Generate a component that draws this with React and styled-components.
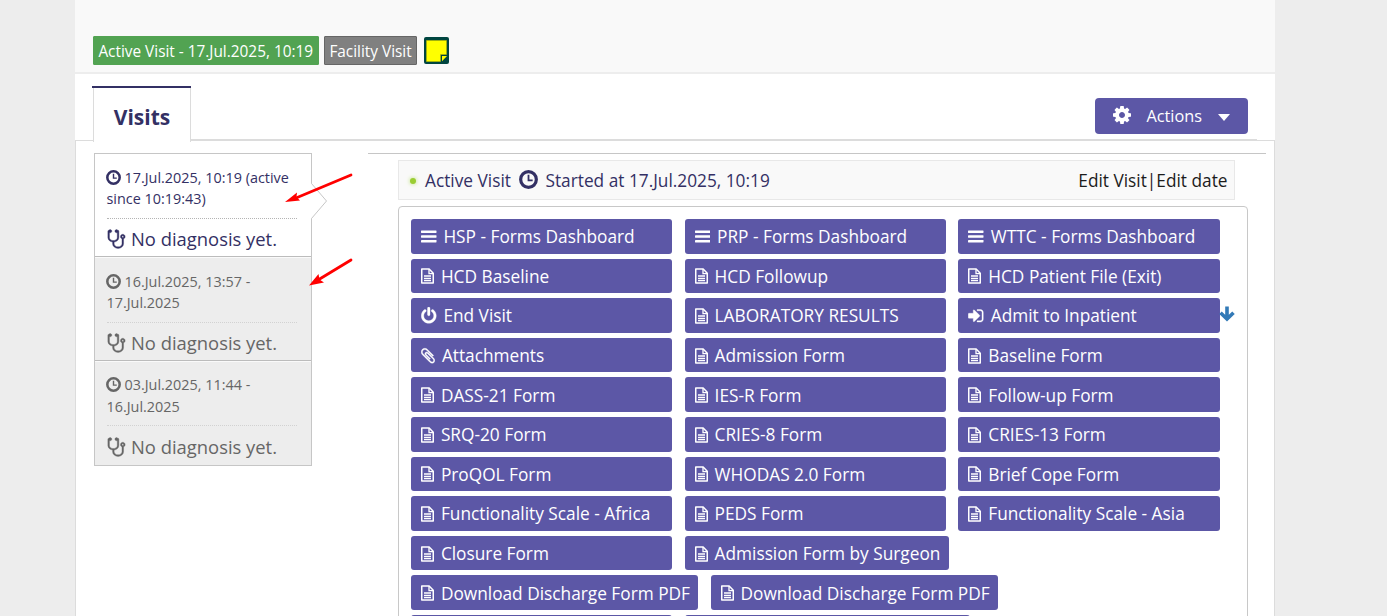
import React from "react";
import styled, { createGlobalStyle, css } from "styled-components";

const Global = createGlobalStyle`
  * { box-sizing: border-box; }
  body { margin: 0; background: #ededed; font-family: "Open Sans", "Noto Sans", sans-serif; color: #333064; overflow: hidden; }
`;

const Page = styled.div`
  width: 1200px;
  height: 616px;
  margin-left: 75px;
  display: flex;
  flex-direction: column;
  background: #fff;
  overflow: hidden;
`;

const Header = styled.header`
  flex: none;
  height: 74px;
  background: #f9f9f9;
  border-bottom: 2px solid #ededed;
  padding: 36px 0 0 18px;
  display: flex;
  align-items: flex-start;
`;

const Tag = styled.span`
  height: 29px;
  width: ${(p) => p.$width}px;
  margin-right: ${(p) => p.$gap}px;
  border: 1px solid ${(p) => p.$border};
  border-radius: 1px;
  background: ${(p) => p.$color};
  color: #fff;
  font-size: 15.36px;
  line-height: 30px;
  padding-left: 4.4px;
  white-space: nowrap;
`;

const Note = styled.svg`
  margin-top: 1px;
  flex: none;
`;

const TabStrip = styled.div`
  flex: none;
  height: 67px;
  display: flex;
  align-items: flex-end;
`;

const TabLine = styled.div`
  height: ${(p) => p.$height}px;
  background: #dcdcdc;
  ${(p) => (p.$width ? css`width: ${p.$width}px;` : css`flex: 1;`)}
`;

const Tab = styled.div`
  width: 99px;
  height: 56px;
  margin: 0 0 -1px -1px;
  border-top: 2px solid #333064;
  position: relative;
  z-index: 1;
`;

const TabFace = styled.div`
  margin-left: 1px;
  height: 54px;
  background: #fff;
  border: solid #dcdcdc;
  border-width: 0 1px;
  text-align: center;
  font-size: 21px;
  font-weight: 700;
  line-height: 59px;
`;

const ActionsCell = styled.div`
  flex: 1;
  display: flex;
  flex-direction: column;
  align-items: flex-end;
`;

const ActionsButton = styled.button`
  width: 153px;
  height: 36px;
  margin: 0 27px 5px 0;
  padding: 0 18px 0 17.5px;
  border: 0;
  border-radius: 4px;
  background: #5c57a6;
  color: #fff;
  font: 16.3px "Open Sans", sans-serif;
  display: flex;
  align-items: center;
  justify-content: space-between;
`;

const GearIcon = styled.svg`
  margin-top: -2px;
`;

const Caret = styled.svg`
  margin-top: 2px;
`;

const Lines = styled.div`
  width: 100%;
  display: flex;
  align-items: flex-end;
`;

const Panel = styled.main`
  flex: 1;
  min-height: 0;
  border: solid #dcdcdc;
  border-width: 0 1px;
  padding: 12px 8px 0 18px;
  display: flex;
  align-items: flex-start;
`;

const VisitList = styled.aside`
  width: 218px;
  margin-right: 56px;
  border: 1px solid #c6c6c6;
  flex: none;
`;

const Visit = styled.div`
  position: relative;
  height: ${(p) => p.$height}px;
  padding: ${(p) => (p.$last ? 12 : 12.5)}px 14px 0 11px;
  color: ${(p) => (p.$active ? "#333064" : "#666")};
  background: ${(p) => (p.$active ? "#fff" : "#ededed")};
  border-bottom: ${(p) => (p.$last ? "0" : "1px solid #bcbcbc")};
  border-top: ${(p) => (p.$active ? "0" : "1px solid #fafafa")};
`;

const VisitDate = styled.div`
  font-size: 14.4px;
  line-height: 21.5px;
  height: ${(p) => (p.$last ? 52 : 52.5)}px;
  margin-left: 0.5px;
  white-space: nowrap;
  border-bottom: 1px dotted ${(p) => (p.$active ? "#b4b4b4" : "#d2d2d2")};
  svg { vertical-align: -2px; margin: 0 3.5px 0 -0.5px; }
`;

const Diagnosis = styled.div`
  font-size: 18.4px;
  line-height: 24px;
  padding-top: ${(p) => (p.$last ? 9 : 8)}px;
  display: flex;
  align-items: center;
  gap: 5px;
  padding-left: 1px;
`;

const Pointer = styled.svg`
  position: absolute;
  left: 216px;
  top: 28px;
`;

const Detail = styled.section`
  flex: 1;
  height: 463px;
  border-top: 1px solid #c6c6c6;
  padding: 6px 18px 0 30px;
`;

const StatusBar = styled.div`
  width: 837px;
  height: 40px;
  padding: 1px 6.5px 0 11px;
  border: 1px solid #e8e8e8;
  background: #f9f9f9;
  display: flex;
  align-items: center;
  font-size: 17.28px;
  svg { margin: -3px 7.8px 0; }
`;

const Dot = styled.i`
  width: 6px;
  height: 6px;
  margin-right: 9px;
  border-radius: 50%;
  background: #9acd32;
  box-shadow: 0 0 4px #b9e070;
`;

const EditLinks = styled.span`
  margin-left: auto;
  color: #1c1c1c;
`;

const FormsBox = styled.div`
  width: 850px;
  height: 430px;
  margin-top: 6px;
  padding: 12px;
  border: 1px solid #c8c8c8;
  border-radius: 4px;
  display: flex;
  flex-direction: column;
  gap: 5px;
`;

const FormRow = styled.div`
  position: relative;
  flex: none;
  display: flex;
  gap: 12.4px;
`;

const FormButton = styled.button`
  min-width: ${(p) => p.$width || 261.3}px;
  height: 34.6px;
  padding: 1px 8.3px 0 10px;
  border: 0;
  border-radius: 3px;
  background: #5c57a6;
  color: #fff;
  font: 17.28px "Open Sans", sans-serif;
  white-space: nowrap;
  display: flex;
  align-items: center;
  gap: 6.9px;
`;

const DownArrow = styled.svg`
  position: absolute;
  left: 808px;
  top: 8px;
`;

const Annotations = styled.svg`
  position: absolute;
  left: 280px;
  top: 168px;
  z-index: 3;
`;

const paths = {
  clip: [1408, "M1404 1385q0 117-79 196t-196 79q-135 0-235-100L117 784Q4 669 4 513q0-159 110-270t269-111q158 0 273 113l605 606q10 10 10 22 0 16-30.5 46.500T1194 950q-13 0-23-10L565 333q-79-77-181-77-106 0-179 75t-73 181q0 105 76 181l776 777q63 63 145 63 64 0 106-42t42-106q0-82-63-145L633 659q-26-24-60-24-29 0-48 19t-19 48q0 32 25 59l410 410q10 10 10 22 0 16-31 47t-47 31q-12 0-22-10L441 851q-63-61-63-149 0-82 57-139t139-57q88 0 149 63l581 581q100 98 100 235z"],
  power: [1536, "M1536 896q0 156-61 298t-164 245-245 164-298 61-298-61-245-164-164-245-61-298q0-182 80.500-343t226.500-270q43-32 95.500-25t83.500 50q32 42 24.500 94.500t-49.500 84.500q-98 74-151.500 181t-53.500 228q0 104 40.500 198.500t109.500 163.500 163.500 109.500 198.500 40.500 198.500-40.500 163.500-109.500 109.500-163.500 40.500-198.500q0-121-53.500-228t-151.500-181q-42-32-49.500-84.500t24.500-94.500q31-43 84-50t95 25q146 109 226.500 270t80.500 343zm-640-768v640q0 52-38 90t-90 38-90-38-38-90v-640q0-52 38-90t90-38 90 38 38 90z"],
  enter: [1536, "M1184 896q0 26-19 45L621 1485q-19 19-45 19t-45-19-19-45v-288H64q-26 0-45-19t-19-45V704q0-26 19-45t45-19h448V352q0-26 19-45t45-19 45 19l544 544q19 19 19 45zm352-352v704q0 119-84.500 203.500T1248 1536H928q-13 0-22.500-9.500T896 1504q0-4-1-20t-.5-26.500 3-23.500 10-19.500 20.500-6.500h320q66 0 113-47t47-113V544q0-66-47-113t-113-47H936l-11.500-1-11.500-3-8-5.500-7-9-2-13.500q0-4-1-20t-.5-26.500 3-23.500 10-19.500T928 256h320q119 0 203.500 84.500T1536 544z"],
};

const FormIcon = ({ kind }) => {
  if (kind === "menu") {
    return (
      <svg width="15.5" height="13" viewBox="0 0 15.5 13" fill="#fff">
        <rect y="0.500" width="15.500" height="2.400" rx="0.400" />
        <rect y="5.300" width="15.500" height="2.400" rx="0.400" />
        <rect y="10.100" width="15.500" height="2.400" rx="0.400" />
      </svg>
    );
  }
  if (kind === "file") {
    return (
      <svg width="13" height="16" viewBox="0 0 13 16" fill="none" stroke="#fff">
        <path d="M.75 1h7.400l4.100 4.300V15H.75z" strokeWidth="1.500" strokeLinejoin="round" />
        <path d="M8 1v4.600h4.200" strokeWidth="1.300" />
        <path d="M3 8h7M3 10.300h7M3 12.500h7" strokeWidth="1.300" />
      </svg>
    );
  }
  const [box, d] = paths[kind];
  return (
    <svg width={kind === "clip" ? 14 : 15.5} height="17.500" viewBox={`0 0 ${box} 1792`} fill="#fff" stroke="#fff" strokeWidth="35">
      <path d={d} />
    </svg>
  );
};

const Clock = ({ size }) => (
  <svg width={size} height={size} viewBox="0 0 16 16" fill="none" stroke="currentColor">
    <circle cx="8" cy="8" r="6.600" strokeWidth="2.700" />
    <path d="M8 4v4.700h3.500" strokeWidth="1.500" />
  </svg>
);

const Stethoscope = () => (
  <svg width="19" height="20" viewBox="160 80 1472 1632" fill="currentColor" stroke="currentColor" strokeWidth="30">
    <path d="M1472 704q0-26-19-45t-45-19-45 19-19 45 19 45 45 19 45-19 19-45zm128 0q0 62-35.500 111t-92.500 70v395q0 159-131.500 271.500t-316.500 112.500-316.500-112.500-131.500-271.500v-132q-164-20-274-128t-110-252v-512q0-26 19-45t45-19q6 0 16 2 17-30 47-48t65-18q53 0 90.500 37.500t37.500 90.500-37.500 90.500-90.500 37.500q-33 0-64-18v402q0 106 94 181t226 75 226-75 94-181v-402q-31 18-64 18-53 0-90.500-37.500t-37.500-90.500 37.500-90.500 90.500-37.500q35 0 65 18t47 48q10-2 16-2 26 0 45 19t19 45v512q0 144-110 252t-274 128v132q0 106 94 181t226 75 226-75 94-181v-395q-57-21-92.500-70t-35.500-111q0-80 56-136t136-56 136 56 56 136z" />
  </svg>
);

const Gear = () => (
  <GearIcon width="18" height="18" viewBox="128 128 1536 1536" fill="#fff">
    <path d="M1152 896q0-106-75-181t-181-75-181 75-75 181 75 181 181 75 181-75 75-181zm512-109v222q0 12-8 23t-20 13l-185 28q-19 54-39 91 35 50 107 138 10 12 10 25t-9 23q-27 37-99 108t-94 71q-12 0-26-9l-138-108q-44 23-91 38-16 136-29 186-7 28-36 28h-222q-14 0-24.500-8.500t-11.500-21.500l-28-184q-49-16-90-37l-141 107q-10 9-25 9-14 0-25-11-126-114-165-168-7-10-7-23 0-12 8-23 15-21 51-66.500t54-70.500q-27-50-41-99l-183-27q-13-2-21-12.500t-8-23.500v-222q0-12 8-23t19-13l186-28q14-46 39-92-40-57-107-138-10-12-10-24 0-10 9-23 26-36 98.500-107.500t94.500-71.500q13 0 26 10l138 107q44-23 91-38 16-136 29-186 7-28 36-28h222q14 0 24.500 8.500t11.500 21.500l28 184q49 16 90 37l142-107q9-9 24-9 13 0 25 10 129 119 165 170 7 8 7 22 0 12-8 23-15 21-51 66.500t-54 70.500q26 50 41 98l183 28q13 2 21 12.500t8 23.500z" />
  </GearIcon>
);

const rows = [
  [["menu", "HSP - Forms Dashboard"], ["menu", "PRP - Forms Dashboard"], ["menu", "WTTC - Forms Dashboard"]],
  [["file", "HCD Baseline"], ["file", "HCD Followup"], ["file", "HCD Patient File (Exit)"]],
  [["power", "End Visit"], ["file", "LABORATORY RESULTS"], ["enter", "Admit to Inpatient"]],
  [["clip", "Attachments"], ["file", "Admission Form"], ["file", "Baseline Form"]],
  [["file", "DASS-21 Form"], ["file", "IES-R Form"], ["file", "Follow-up Form"]],
  [["file", "SRQ-20 Form"], ["file", "CRIES-8 Form"], ["file", "CRIES-13 Form"]],
  [["file", "ProQOL Form"], ["file", "WHODAS 2.0 Form"], ["file", "Brief Cope Form"]],
  [["file", "Functionality Scale - Africa"], ["file", "PEDS Form"], ["file", "Functionality Scale - Asia"]],
  [["file", "Closure Form"], ["file", "Admission Form by Surgeon"]],
  [["file", "Download Discharge Form PDF"], ["file", "Download Discharge Form PDF"]],
  [["file", ""], ["file", "", 285]],
];

const visits = [
  { date: ["17.Jul.2025, 10:19 (active", "since 10:19:43)"], height: 103, active: true },
  { date: ["16.Jul.2025, 13:57 -", "17.Jul.2025"], height: 104 },
  { date: ["03.Jul.2025, 11:44 -", "16.Jul.2025"], height: 104, last: true },
];

export default function App() {
  return (
    <>
      <Global />
      <Page>
        <Header>
          <Tag $width={226} $gap={5} $color="#52a352" $border="#52a352">Active Visit - 17.Jul.2025, 10:19</Tag>
          <Tag $width={93} $gap={7} $color="#808080" $border="#666">Facility Visit</Tag>
          <Note width="25" height="27" viewBox="0 0 25 27">
            <rect width="25" height="27" rx="2" fill="#004540" />
            <path d="M2.500 3.500h20v14h-6v7h-14z" fill="#ff0" stroke="#b5bd00" strokeWidth="0.600" />
            <path d="M18 19h5l-5 5.200z" fill="#ff0" />
          </Note>
        </Header>
        <TabStrip>
          <TabLine $height={1} $width={18} />
          <Tab><TabFace>Visits</TabFace></Tab>
          <ActionsCell>
            <ActionsButton>
              <Gear />
              Actions
              <Caret width="12" height="7" viewBox="0 0 12 7"><path d="M0 0h12L6 7z" fill="#fff" /></Caret>
            </ActionsButton>
            <Lines>
              <TabLine $height={2} />
              <TabLine $height={1} $width={18} />
            </Lines>
          </ActionsCell>
        </TabStrip>
        <Panel>
          <VisitList>
            {visits.map((v) => (
              <Visit key={v.date[0]} $height={v.height} $active={v.active} $last={v.last}>
                <VisitDate $active={v.active} $last={v.last}>
                  <Clock size={15} />
                  {v.date[0]}
                  <br />
                  {v.date[1]}
                </VisitDate>
                <Diagnosis $last={v.last}>
                  <Stethoscope />
                  No diagnosis yet.
                </Diagnosis>
                {v.active && (
                  <Pointer width="17" height="38" viewBox="0 0 17 38">
                    <path d="M0 1.500h.5L15.500 19 .5 36.500H0z" fill="#fff" />
                    <path d="M.5 1.500 15.500 19 .5 36.500" fill="none" stroke="#c6c6c6" />
                  </Pointer>
                )}
              </Visit>
            ))}
          </VisitList>
          <Detail>
            <StatusBar>
              <Dot />
              Active Visit
              <Clock size={19} />
              Started at 17.Jul.2025, 10:19
              <EditLinks>Edit Visit|Edit date</EditLinks>
            </StatusBar>
            <FormsBox>
              {rows.map((row, i) => (
                <FormRow key={i}>
                  {row.map(([kind, label, width], j) => (
                    <FormButton key={j} $width={width}>
                      <FormIcon kind={kind} />
                      {label}
                    </FormButton>
                  ))}
                  {i === 2 && (
                    <DownArrow width="16" height="16" viewBox="0 0 16 16" fill="none" stroke="#337ab7" strokeWidth="3.600">
                      <path d="M8 0.500v12M1.500 6.800 8 13l6.500-6.200" />
                    </DownArrow>
                  )}
                </FormRow>
              ))}
            </FormsBox>
          </Detail>
        </Panel>
      </Page>
      <Annotations width="80" height="124" viewBox="0 0 80 124">
        <g stroke="#f00" strokeWidth="2.800" strokeLinecap="round">
          <path d="M71 7 16 30" />
          <path d="M71 92 38 112" />
        </g>
        <path d="M5 34 17 24.500l-.5 4.500 3.500 3.500z" fill="#f00" />
        <path d="M29 117.500 38.500 106l1 5.500 4.500 3z" fill="#f00" />
      </Annotations>
    </>
  );
}
